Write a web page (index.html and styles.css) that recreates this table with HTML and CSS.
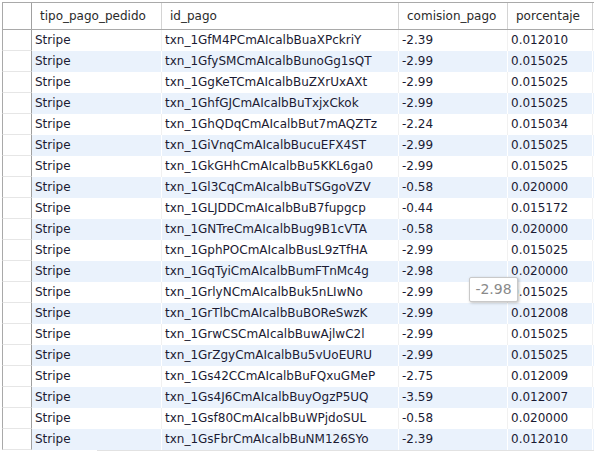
FILE: index.html
```html
<!DOCTYPE html>
<html>
<head>
<meta charset="utf-8">
<link rel="stylesheet" href="styles.css">
</head>
<body>
<div class="grid">
  <div class="row head">
    <div class="gut"></div>
    <div class="cell">tipo_pago_pedido</div>
    <div class="cell">id_pago</div>
    <div class="cell">comision_pago</div>
    <div class="cell">porcentaje</div>
  </div>
  <div class="row"><div class="gut"></div><div class="cell">Stripe</div><div class="cell">txn_1GfM4PCmAIcalbBuaXPckriY</div><div class="cell">-2.39</div><div class="cell">0.012010</div></div>
  <div class="row alt"><div class="gut"></div><div class="cell">Stripe</div><div class="cell">txn_1GfySMCmAIcalbBunoGg1sQT</div><div class="cell">-2.99</div><div class="cell">0.015025</div></div>
  <div class="row"><div class="gut"></div><div class="cell">Stripe</div><div class="cell">txn_1GgKeTCmAIcalbBuZXrUxAXt</div><div class="cell">-2.99</div><div class="cell">0.015025</div></div>
  <div class="row alt"><div class="gut"></div><div class="cell">Stripe</div><div class="cell">txn_1GhfGJCmAIcalbBuTxjxCkok</div><div class="cell">-2.99</div><div class="cell">0.015025</div></div>
  <div class="row"><div class="gut"></div><div class="cell">Stripe</div><div class="cell">txn_1GhQDqCmAIcalbBut7mAQZTz</div><div class="cell">-2.24</div><div class="cell">0.015034</div></div>
  <div class="row alt"><div class="gut"></div><div class="cell">Stripe</div><div class="cell">txn_1GiVnqCmAIcalbBucuEFX4ST</div><div class="cell">-2.99</div><div class="cell">0.015025</div></div>
  <div class="row"><div class="gut"></div><div class="cell">Stripe</div><div class="cell">txn_1GkGHhCmAIcalbBu5KKL6ga0</div><div class="cell">-2.99</div><div class="cell">0.015025</div></div>
  <div class="row alt"><div class="gut"></div><div class="cell">Stripe</div><div class="cell">txn_1Gl3CqCmAIcalbBuTSGgoVZV</div><div class="cell">-0.58</div><div class="cell">0.020000</div></div>
  <div class="row"><div class="gut"></div><div class="cell">Stripe</div><div class="cell">txn_1GLJDDCmAIcalbBuB7fupgcp</div><div class="cell">-0.44</div><div class="cell">0.015172</div></div>
  <div class="row alt"><div class="gut"></div><div class="cell">Stripe</div><div class="cell">txn_1GNTreCmAIcalbBug9B1cVTA</div><div class="cell">-0.58</div><div class="cell">0.020000</div></div>
  <div class="row"><div class="gut"></div><div class="cell">Stripe</div><div class="cell">txn_1GphPOCmAIcalbBusL9zTfHA</div><div class="cell">-2.99</div><div class="cell">0.015025</div></div>
  <div class="row alt"><div class="gut"></div><div class="cell">Stripe</div><div class="cell">txn_1GqTyiCmAIcalbBumFTnMc4g</div><div class="cell">-2.98</div><div class="cell">0.020000</div></div>
  <div class="row"><div class="gut"></div><div class="cell">Stripe</div><div class="cell">txn_1GrlyNCmAIcalbBuk5nLIwNo</div><div class="cell">-2.99</div><div class="cell">0.015025</div></div>
  <div class="row alt"><div class="gut"></div><div class="cell">Stripe</div><div class="cell">txn_1GrTlbCmAIcalbBuBOReSwzK</div><div class="cell">-2.99</div><div class="cell">0.012008</div></div>
  <div class="row"><div class="gut"></div><div class="cell">Stripe</div><div class="cell">txn_1GrwCSCmAIcalbBuwAjlwC2l</div><div class="cell">-2.99</div><div class="cell">0.015025</div></div>
  <div class="row alt"><div class="gut"></div><div class="cell">Stripe</div><div class="cell">txn_1GrZgyCmAIcalbBu5vUoEURU</div><div class="cell">-2.99</div><div class="cell">0.015025</div></div>
  <div class="row"><div class="gut"></div><div class="cell">Stripe</div><div class="cell">txn_1Gs42CCmAIcalbBuFQxuGMeP</div><div class="cell">-2.75</div><div class="cell">0.012009</div></div>
  <div class="row alt"><div class="gut"></div><div class="cell">Stripe</div><div class="cell">txn_1Gs4J6CmAIcalbBuyOgzP5UQ</div><div class="cell">-3.59</div><div class="cell">0.012007</div></div>
  <div class="row"><div class="gut"></div><div class="cell">Stripe</div><div class="cell">txn_1Gsf80CmAIcalbBuWPjdoSUL</div><div class="cell">-0.58</div><div class="cell">0.020000</div></div>
  <div class="row alt"><div class="gut"></div><div class="cell">Stripe</div><div class="cell">txn_1GsFbrCmAIcalbBuNM126SYo</div><div class="cell">-2.39</div><div class="cell">0.012010</div></div>
  <div class="scroll"><div class="thumb"></div></div>
  <div class="tip">-2.98</div>
</div>
</body>
</html>
```

FILE: styles.css
```css
html, body {
  margin: 0;
  padding: 0;
  background: #ffffff;
  overflow: hidden;
}
body {
  font-family: "DejaVu Sans", Verdana, sans-serif;
  font-size: 12px;
  color: #1b1b33;
}
.grid {
  position: relative;
  margin: 2px 0 0 2px;
  width: 592px;
}
.row {
  display: grid;
  grid-template-columns: 30px 130px 237px 109px 85px;
  height: 21px;
  background: #ffffff;
}
.row.alt {
  background: #eaf2fc;
}
.row .gut {
  background: #ffffff;
  border-left: 1px solid #a9a9a9;
  border-right: 1px solid #a0a0a0;
  border-bottom: 1px solid #e6e6e6;
}
.row .cell {
  padding-left: 3px;
  line-height: 21px;
  white-space: nowrap;
  overflow: hidden;
  border-right: 1px solid #f1f1f1;
}
.row.alt .cell {
  border-right-color: #ffffff;
}
.row.head {
  height: 26px;
  border-top: 1px solid #a9a9a9;
  border-bottom: 1px solid #a9a9a9;
  color: #2a2a2a;
}
.row.head .gut {
  border-bottom: none;
}
.row.head .cell {
  line-height: 26px;
  padding-left: 8px;
  border-right: 1px solid #d4d4d4;
}
.scroll {
  height: 3px;
  margin-left: 95px;
  background: #e2e2e2;
}
.tip {
  position: absolute;
  left: 467px;
  top: 275px;
  width: 47px;
  height: 23px;
  line-height: 23px;
  text-align: center;
  font-size: 14px;
  color: #8a8a8a;
  background: #ffffff;
  border: 1px solid #c9c9c9;
  border-radius: 2px;
  box-shadow: 1px 1px 3px rgba(0,0,0,0.25);
}
```
